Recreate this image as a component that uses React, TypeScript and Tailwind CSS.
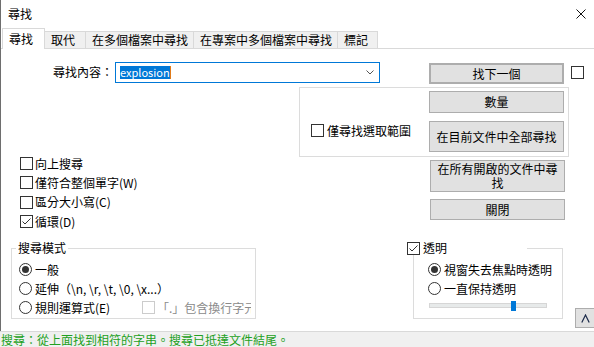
import React from 'react';

const Check = ({ checked = false, disabled = false }: { checked?: boolean; disabled?: boolean }) => (
  <span
    className={`flex h-[13px] w-[13px] shrink-0 items-center justify-center border bg-white ${
      disabled ? 'border-[#cccccc]' : 'border-[#333333]'
    }`}
  >
    {checked && (
      <svg width="11" height="11" viewBox="0 0 11 11">
        <polyline points="1.5,5.5 4,8 9.5,2.5" fill="none" stroke="#333333" strokeWidth="1" />
      </svg>
    )}
  </span>
);

const Radio = ({ on = false }: { on?: boolean }) => (
  <span className="flex h-[13px] w-[13px] shrink-0 items-center justify-center rounded-full border border-[#333333] bg-white">
    {on && <span className="h-[7px] w-[7px] rounded-full bg-[#333333]" />}
  </span>
);

const Btn = ({ children, className = '' }: { children: React.ReactNode; className?: string }) => (
  <div
    className={`flex w-[135px] shrink-0 items-center justify-center border-[#adadad] bg-[#e1e1e1] px-[3px] text-center leading-[14px] ${className}`}
  >
    {children}
  </div>
);

const tabs = [
  { label: '取代', w: 'w-[41px]' },
  { label: '在多個檔案中尋找', w: 'w-[108px]' },
  { label: '在專案中多個檔案中尋找', w: 'w-[144px]' },
  { label: '標記', w: 'w-[40px]' },
];

const CheckRow = ({ label, hot, checked }: { label: string; hot?: string; checked?: boolean }) => (
  <div className="flex h-[19.33px] items-center">
    <Check checked={checked} />
    <span className="ml-[2px] leading-[14px]">
      {label}
      {hot}
    </span>
  </div>
);

export default function App() {
  return (
    <div
      className="flex h-[347px] w-[594px] flex-col overflow-hidden bg-white text-[12px] text-black"
      style={{ fontFamily: '"Noto Sans CJK TC", "Noto Sans", sans-serif' }}
    >
      <div className="flex flex-1 flex-col border-l border-[#6e6e6e]">
        {/* title bar */}
        <div className="flex h-[28px] shrink-0 items-center justify-between pl-[7px] pr-[8px]">
          <span className="leading-[14px]">尋找</span>
          <svg width="10" height="10" viewBox="0 0 10 10">
            <path d="M0.5 0.5 L9.5 9.5 M9.5 0.5 L0.5 9.5" stroke="#111" strokeWidth="1" />
          </svg>
        </div>

        {/* tabs */}
        <div className="flex h-[21px] shrink-0 items-end border-b border-[#d9d9d9] pl-[1px]">
          <div className="relative z-10 -mb-px flex h-[21px] w-[43px] items-start border border-b-0 border-[#d9d9d9] bg-white pl-[6px] pt-[3px] leading-[14px]">
            尋找
          </div>
          {tabs.map((t) => (
            <div
              key={t.label}
              className={`flex h-[17px] ${t.w} items-center border-r border-t border-[#d9d9d9] bg-[#f0f0f0] pl-[6px] leading-[14px]`}
            >
              {t.label}
            </div>
          ))}
        </div>

        {/* row 1 */}
        <div className="mt-[13px] flex items-start">
          <div className="w-[112px] pt-[3px] text-right leading-[14px]">尋找內容：</div>
          <div className="ml-[2px] flex h-[21px] w-[265px] items-center border border-[#0078d7] pl-[4px] pr-[5px]">
            <span className="flex h-[13px] items-center bg-[#0078d7] text-[11px] leading-[13px] text-white">
              explosion
            </span>
            <span className="h-[13px] w-px bg-[#e07b1a]" />
            <svg className="ml-auto" width="8" height="5" viewBox="0 0 8 5">
              <polyline points="0.5,0.5 4,4 7.5,0.5" fill="none" stroke="#555" strokeWidth="1" />
            </svg>
          </div>
          <Btn className="ml-[49px] mt-[1px] h-[21px] border-2 border-[#0078d7]">找下一個</Btn>
          <div className="ml-[7px] mt-[4px]">
            <Check />
          </div>
        </div>

        {/* selection group */}
        <div className="ml-[298px] mt-[3px] flex h-[70px] w-[270px] shrink-0 border border-[#dcdcdc]">
          <div className="ml-[11px] mt-[36px] flex h-[13px] items-center">
            <Check />
            <span className="ml-[3px] leading-[14px]">僅尋找選取範圍</span>
          </div>
          <div className="ml-auto flex flex-col pr-[4px] pt-[3px]">
            <Btn className="h-[22px] border">數量</Btn>
            <Btn className="mt-[8px] h-[31px] border">在目前文件中全部尋找</Btn>
          </div>
        </div>

        {/* options + buttons */}
        <div className="flex h-[84px] shrink-0 justify-between pr-[29px]">
          <div className="-mt-[3px] flex flex-col pl-[19px]">
            <CheckRow label="向上搜尋" />
            <CheckRow label="僅符合整個單字" hot="(W)" />
            <CheckRow label="區分大小寫" hot="(C)" />
            <CheckRow label="循環" hot="(D)" checked />
          </div>
          <div className="mt-[3px] flex flex-col">
            <Btn className="h-[32px] border">在所有開啟的文件中尋找</Btn>
            <Btn className="mt-[7px] h-[21px] border">關閉</Btn>
          </div>
        </div>

        {/* bottom groups */}
        <div className="flex items-start">
          <fieldset className="ml-[10px] h-[78px] w-[245px] min-w-0 shrink-0 border border-[#dcdcdc] pl-[7px] pr-[4px] pt-[5px]">
            <legend className="-ml-[3px] px-[2px] leading-[14px]">搜尋模式</legend>
            <div className="flex h-[19px] items-center">
              <Radio on />
              <span className="ml-[3px] leading-[14px]">一般</span>
            </div>
            <div className="flex h-[19px] items-center">
              <Radio />
              <span className="ml-[3px] whitespace-nowrap leading-[14px]">延伸（\n, \r, \t, \0, \x...）</span>
            </div>
            <div className="flex h-[19px] w-full items-center overflow-hidden whitespace-nowrap">
              <Radio />
              <span className="ml-[3px] w-[107px] shrink-0 leading-[14px]">規則運算式(E)</span>
              <Check disabled />
              <span className="ml-[2px] shrink-0 leading-[14px] text-[#8a8a8a]">「.」包含換行字元</span>
            </div>
          </fieldset>

          <fieldset className="ml-[157px] h-[78px] w-[150px] min-w-0 shrink-0 border border-[#dcdcdc] pl-[14px] pt-[5px]">
            <legend className="-ml-[21px] w-[120px] bg-white">
              <span className="flex h-[14px] w-[120px] items-center">
                <Check checked />
                <span className="ml-[3px] leading-[14px]">透明</span>
              </span>
            </legend>
            <div className="flex h-[19px] items-center">
              <Radio on />
              <span className="ml-[3px] whitespace-nowrap leading-[14px]">視窗失去焦點時透明</span>
            </div>
            <div className="flex h-[19px] items-center">
              <Radio />
              <span className="ml-[3px] whitespace-nowrap leading-[14px]">一直保持透明</span>
            </div>
            <div className="relative ml-[1px] flex h-[15px] w-[118px] items-center">
              <div className="h-[5px] w-full border border-[#d6d6d6] bg-[#e7eaea]" />
              <div className="absolute left-[82px] top-[2.5px] h-[10px] w-[5px] bg-[#0078d7]" />
            </div>
          </fieldset>

          <div className="ml-[12px] mt-[67px] flex h-[20px] w-[21px] shrink-0 items-center justify-center border border-[#adadad] bg-[#e1e1e1]">
            <svg width="9" height="9" viewBox="0 0 9 9">
              <polyline points="0.8,8.5 4.5,1 8.2,8.5" fill="none" stroke="#1b2a4a" strokeWidth="1.2" />
            </svg>
          </div>
        </div>
      </div>

      {/* status bar */}
      <div className="h-[16px] shrink-0 border-t border-[#d9d9d9] bg-[#f0f0f0] pl-[1px] pt-[1px] leading-[14px] text-[#22a022]">
        搜尋：從上面找到相符的字串。搜尋已抵達文件結尾。
      </div>
    </div>
  );
}
